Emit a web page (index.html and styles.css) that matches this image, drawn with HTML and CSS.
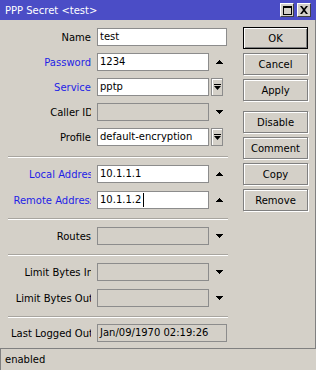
FILE: index.html
```html
<!DOCTYPE html>
<html lang="en">
<head>
    <meta charset="UTF-8"/>
    <title>PPP Secret &lt;test&gt;</title>
    <link rel="stylesheet" href="styles.css">
</head>
<body>
<div class="window">
    <div class="titlebar">
        <span class="title">PPP Secret &lt;test&gt;</span>
        <div class="win-btns">
            <span class="win-btn"><span class="max-box"></span></span>
            <span class="win-btn">
                <svg width="8" height="8" viewBox="0 0 8 8"><path d="M0 0h2l2 2.5 2-2.5h2l-3 4 3 4h-2l-2-2.5-2 2.5h-2l3-4z" fill="#000"/></svg>
            </span>
        </div>
    </div>

    <div class="main">
        <div class="form">
            <div class="group first">
                <div class="row">
                    <div class="label"><span>Name</span></div>
                    <div class="field wide">test</div>
                </div>
                <div class="row">
                    <div class="label blue"><span>Password</span></div>
                    <div class="field">1234</div>
                    <div class="side"><svg class="tri" width="8" height="4" viewBox="0 0 8 4"><path d="M4 0L8 4H0z"/></svg></div>
                </div>
                <div class="row">
                    <div class="label blue"><span>Service</span></div>
                    <div class="field">pptp</div>
                    <div class="side drop">
                        <svg width="7" height="7" viewBox="0 0 7 7"><rect x="0" y="0" width="7" height="1"/><path d="M0 2h7L3.5 6z"/></svg>
                    </div>
                </div>
                <div class="row">
                    <div class="label cut"><span>Caller ID</span></div>
                    <div class="field off"></div>
                    <div class="side"><svg class="tri" width="8" height="4" viewBox="0 0 8 4"><path d="M0 0H8L4 4z"/></svg></div>
                </div>
                <div class="row">
                    <div class="label"><span>Profile</span></div>
                    <div class="field">default-encryption</div>
                    <div class="side drop">
                        <svg width="7" height="7" viewBox="0 0 7 7"><rect x="0" y="0" width="7" height="1"/><path d="M0 2h7L3.5 6z"/></svg>
                    </div>
                </div>
            </div>

            <div class="sep"></div>

            <div class="group">
                <div class="row">
                    <div class="label blue shift"><span>Local Address</span></div>
                    <div class="field">10.1.1.1</div>
                    <div class="side"><svg class="tri" width="8" height="4" viewBox="0 0 8 4"><path d="M4 0L8 4H0z"/></svg></div>
                </div>
                <div class="row">
                    <div class="label blue cut-more"><span>Remote Address</span></div>
                    <div class="field">10.1.1.2<span class="caret"></span></div>
                    <div class="side"><svg class="tri" width="8" height="4" viewBox="0 0 8 4"><path d="M4 0L8 4H0z"/></svg></div>
                </div>
            </div>

            <div class="sep"></div>

            <div class="group">
                <div class="row">
                    <div class="label"><span>Routes</span></div>
                    <div class="field off"></div>
                    <div class="side"><svg class="tri" width="8" height="4" viewBox="0 0 8 4"><path d="M0 0H8L4 4z"/></svg></div>
                </div>
            </div>

            <div class="sep"></div>

            <div class="group">
                <div class="row">
                    <div class="label cut"><span>Limit Bytes In</span></div>
                    <div class="field off"></div>
                    <div class="side"><svg class="tri" width="8" height="4" viewBox="0 0 8 4"><path d="M0 0H8L4 4z"/></svg></div>
                </div>
                <div class="row">
                    <div class="label cut"><span>Limit Bytes Out</span></div>
                    <div class="field off"></div>
                    <div class="side"><svg class="tri" width="8" height="4" viewBox="0 0 8 4"><path d="M0 0H8L4 4z"/></svg></div>
                </div>
            </div>

            <div class="sep last"></div>

            <div class="row">
                <div class="label cut"><span>Last Logged Out</span></div>
                <div class="field wide off">Jan/09/1970 02:19:26</div>
            </div>
        </div>

        <div class="actions">
            <button class="btn default">OK</button>
            <button class="btn">Cancel</button>
            <button class="btn">Apply</button>
            <button class="btn spaced">Disable</button>
            <button class="btn">Comment</button>
            <button class="btn">Copy</button>
            <button class="btn">Remove</button>
        </div>
    </div>

    <div class="status">enabled</div>
</div>
</body>
</html>
```

FILE: styles.css
```css
*{
    box-sizing: border-box;
}

body{
    margin: 0;
    font-family: "DejaVu Sans", sans-serif;
    font-size: 10px;
    color: #000;
    background: #d4d0c8;
}

.window{
    width: 316px;
    height: 370px;
    display: flex;
    flex-direction: column;
}

.titlebar{
    height: 20px;
    background: #4b4dc6;
    color: #fff;
    display: flex;
    align-items: center;
    justify-content: space-between;
    padding: 0 5px 0 5px;
}

.title{
    font-size: 10px;
}

.win-btns{
    display: flex;
    gap: 3px;
}

.win-btn{
    width: 14px;
    height: 14px;
    background: #d4d0c8;
    border: 1px solid;
    border-color: #fff #404040 #404040 #fff;
    display: flex;
    align-items: center;
    justify-content: center;
}

.max-box{
    width: 9px;
    height: 9px;
    border: 1px solid #000;
    border-top-width: 2px;
}

.main{
    flex: 1;
    display: flex;
    border-right: 1px solid #808080;
}

.form{
    width: 232px;
    padding: 8px 0 0 7px;
}

.group{
    display: flex;
    flex-direction: column;
    gap: 8px;
}

.group.first{
    gap: 7px;
}

.row{
    display: flex;
    align-items: center;
    height: 18px;
}

.label{
    width: 84px;
    overflow: hidden;
    white-space: nowrap;
}

.label span{
    display: block;
    text-align: right;
}

/* long labels: text runs past the clip edge */
.label.cut span{
    margin-right: -2px;
}

.label.cut-more span{
    margin-right: -4px;
}

.label.shift span{
    margin-right: -7px;
}

.blue{
    color: #1f1fe6;
}

.field{
    margin-left: 6px;
    width: 112px;
    height: 18px;
    background: #fff;
    border: 1px solid #8c8c8c;
    padding: 0 2px;
    line-height: 16px;
    white-space: nowrap;
    overflow: hidden;
}

.field.wide{
    width: 130px;
}

.field.off{
    background: #d4d0c8;
}

.caret{
    display: inline-block;
    width: 1px;
    height: 14px;
    background: #000;
    margin-left: 2px;
    vertical-align: middle;
}

.side{
    width: 12px;
    height: 18px;
    margin-left: 2px;
    display: flex;
    align-items: center;
    justify-content: flex-end;
}

.side.drop{
    justify-content: center;
    border: 1px solid #8c8c8c;
    box-shadow: inset 1px 1px #fff;
}

.tri{
    shape-rendering: crispEdges;
}

.sep{
    height: 2px;
    width: 220px;
    margin: 9px 0 7px 1px;
    border-top: 1px solid #a8a59f;
    border-bottom: 1px solid #fff;
}

.group.first + .sep{
    margin-top: 10px;
}

.sep.last{
    margin-bottom: 6px;
}

.actions{
    margin-left: auto;
    margin-right: 7px;
    padding-top: 7px;
    width: 65px;
    display: flex;
    flex-direction: column;
    gap: 4px;
}

.btn{
    height: 22px;
    font-family: "DejaVu Sans", sans-serif;
    font-size: 10px;
    color: #000;
    background: #d4d0c8;
    border: 1px solid #808080;
    box-shadow: inset 1px 1px #fff, 1px 1px #fff;
    padding: 0;
}

.btn.default{
    border-color: #000;
    box-shadow: inset 1px 1px #fff, inset -1px -1px #808080;
}

.btn.spaced{
    margin-top: 6px;
}

.status{
    height: 22px;
    border-top: 1px solid #808080;
    border-left: 1px solid #808080;
    padding: 3px 4px;
    line-height: 16px;
}
```
